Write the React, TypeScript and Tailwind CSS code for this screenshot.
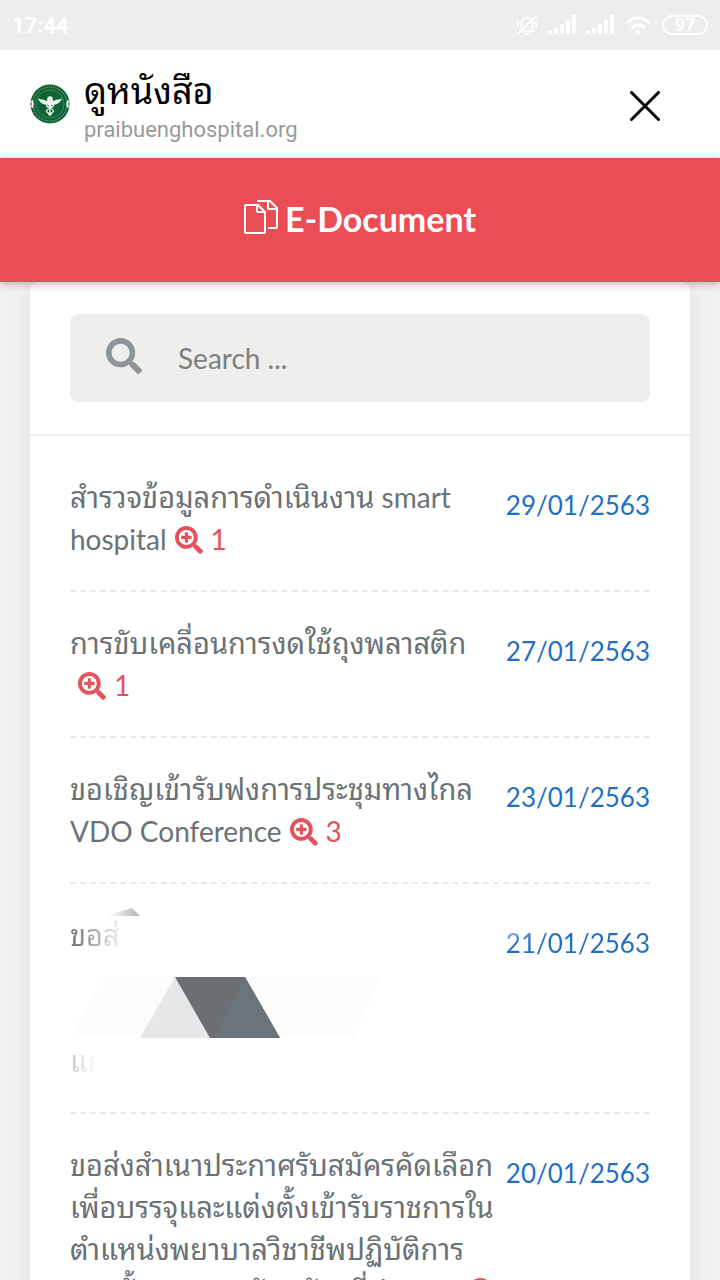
import React from "react";
import { FaSearch, FaSearchPlus } from "react-icons/fa";

type Doc = { title: string; latin?: string; date: string; views?: number; redacted?: boolean };

const docs: Doc[] = [
  { title: "สำรวจข้อมูลการดำเนินงาน", latin: "smart hospital", date: "29/01/2563", views: 1 },
  { title: "การขับเคลื่อนการงดใช้ถุงพลาสติก", date: "27/01/2563", views: 1 },
  { title: "ขอเชิญเข้ารับฟงการประชุมทางไกล", latin: "VDO Conference", date: "23/01/2563", views: 3 },
  { title: "ขอส่", date: "21/01/2563", redacted: true },
  {
    title: "ขอส่งสำเนาประกาศรับสมัครคัดเลือกเพื่อบรรจุและแต่งตั้งเข้ารับราชการในตำแหน่งพยาบาลวิชาชีพปฏิบัติการ ตามขั้นตอนการรับสมัครที่ประกาศ",
    date: "20/01/2563",
  },
];

function Signal() {
  return (
    <svg width="28" height="20" viewBox="0 0 28 20" fill="currentColor" aria-hidden="true">
      <rect x="0" y="16" width="4" height="3" />
      <rect x="6" y="13" width="4" height="6" />
      <rect x="12" y="9" width="4" height="10" />
      <rect x="18" y="5" width="4" height="14" />
      <rect x="24" y="0" width="4" height="19" />
    </svg>
  );
}

function StatusBar() {
  return (
    <div className="flex h-[50px] shrink-0 items-center justify-between bg-[#ebedee] px-3 font-[Roboto,sans-serif] text-white">
      <span className="text-[22px] font-bold">17:44</span>
      <div className="flex items-center gap-2.5">
        <svg width="22" height="22" viewBox="0 0 24 24" fill="none" stroke="currentColor" strokeWidth="2" strokeLinecap="round" strokeLinejoin="round" aria-hidden="true">
          <path d="M6 17v-7a6 6 0 0 1 12 0v7l2 2H4zM10 22h4M2 22 22 2M2 9v5M22 9v5" />
        </svg>
        <Signal />
        <Signal />
        <svg width="24" height="20" viewBox="0 0 24 20" fill="none" stroke="currentColor" strokeWidth="3" aria-hidden="true" className="mx-0.5">
          <path d="M1 8C7 1 17 1 23 8M5.500 13c4-4 9-4 13 0" />
          <circle cx="12" cy="17" r="2.200" fill="currentColor" stroke="none" />
        </svg>
        <span className="flex h-5 w-[46px] items-center justify-center rounded-full border-2 border-white text-lg leading-none font-bold">97</span>
      </div>
    </div>
  );
}

function Emblem() {
  return (
    <svg width="40" height="40" viewBox="0 0 40 40" aria-hidden="true" className="shrink-0">
      <circle cx="20" cy="20" r="19.500" fill="#0f6233" />
      <circle cx="20" cy="20" r="17" fill="none" stroke="#a9cdb6" strokeWidth="1.400" strokeDasharray="1.200 1" pathLength="107" opacity="0.5" />
      <circle cx="20" cy="20" r="14" fill="none" stroke="#4a8f65" strokeWidth="0.800" />
      <path d="M2 16.500q1.500 3.500 0 7M38 16.500q-1.500 3.500 0 7" stroke="#fff" strokeWidth="2" fill="none" />
      <path d="M18.500 21C13 21 9.500 18.500 8 14.500c3 1.500 6 .5 8.500 2.500l3.500-3 3.500 3c2.500-2 5.500-1 8.500-2.500-1.500 4-5 6.500-10.500 6.500v3h-3z" fill="#e9f3ec" />
      <circle cx="20" cy="15" r="2.800" fill="#e9f3ec" />
      <path d="M20 17v15M16.500 21c0 4 7 3 7 6s-5 2-5 4M23.500 21c0 4-7 3-7 6s5 2 5 4" stroke="#e9f3ec" strokeWidth="1.300" fill="none" />
    </svg>
  );
}

function AppHeader() {
  return (
    <header className="flex h-[108px] shrink-0 items-center bg-white pr-[60px] pl-[30px] font-[Roboto,'Noto_Sans_Thai_Looped','Noto_Sans_Thai','Noto_Sans',sans-serif]">
      <Emblem />
      <div className="ml-3.5 flex-1 pt-1">
        <h1 className="text-4xl leading-[48px] text-black">ดูหนังสือ</h1>
        <p className="text-[22px] leading-[28px] text-[#999]">praibuenghospital.org</p>
      </div>
      <button type="button" aria-label="Close" className="mt-1 text-black">
        <svg width="30" height="30" viewBox="0 0 30 30" fill="none" stroke="currentColor" strokeWidth="3" strokeLinecap="round" aria-hidden="true">
          <path d="M1.500 1.500l27 27M28.500 1.500l-27 27" />
        </svg>
      </button>
    </header>
  );
}

function CopyIcon() {
  return (
    <svg width="34" height="34" viewBox="0 0 34 34" fill="none" stroke="currentColor" strokeWidth="2" strokeLinejoin="round" aria-hidden="true" className="mb-0.5">
      <path d="M2 5h12l7 7v20q0 1-1 1H2q-1 0-1-1V6q0-1 1-1zM13 5v6q0 1 1 1h7" />
      <path d="M13 1h13l7 7v19q0 1-1 1h-8M24 1v7q0 1 1 1h8" />
    </svg>
  );
}

function SearchBox() {
  return (
    <div className="border-b-2 border-[#ececec] px-10 py-8">
      <label className="flex h-[88px] items-center rounded-lg bg-[#eeeeed] pl-9">
        <FaSearch className="mb-1 size-9 text-[#8d9599]" aria-hidden="true" />
        <input
          type="text"
          aria-label="Search"
          placeholder="Search ..."
          className="ml-9 min-w-0 flex-1 bg-transparent text-[28px] outline-none placeholder:text-[#808080]"
        />
      </label>
    </div>
  );
}

function MaskedTitle() {
  return (
    <div className="relative h-[168px]">
      <span className="bg-linear-to-r from-[#6b7276] to-white to-[56px] bg-clip-text text-[29px] leading-[36px] text-transparent">ขอส่</span>
      <svg className="absolute left-0 top-[-9px] w-[330px]" height="180" viewBox="0 0 330 180" aria-hidden="true">
        <defs>
          <linearGradient id="smudge">
            <stop offset="0" stopColor="#fff" />
            <stop offset="1" stopColor="#b4b4b4" />
          </linearGradient>
        </defs>
        <path d="M36 11 62 3 70 11z" fill="url(#smudge)" />
        <path d="M34 72h276l-26 61H0z" fill="#fcfcfa" />
        <path d="M105 72 70 133h70z" fill="#e5e7e8" />
        <path d="M105 72h70l35 61h-70z" fill="#6b6e73" />
        <path d="M175 72 210 133h-66z" fill="#68737a" />
      </svg>
      <span className="absolute left-0 top-[126px] bg-linear-to-r from-[#c4c7c9] to-white to-[26px] bg-clip-text text-[29px] text-transparent">แก</span>
    </div>
  );
}

function DocRow({ doc }: { doc: Doc }) {
  return (
    <li className="flex justify-between border-b-2 border-dashed border-[#e8e8e8] py-[30px]">
      <div className="w-[430px] shrink grow-0">
        {doc.redacted ? (
          <MaskedTitle />
        ) : (
          <a href="#document" className="text-[#6b7276]">
            <span className="text-[29px] leading-[36px]">{doc.title}</span>
            {doc.latin && <span> {doc.latin}</span>}
            <FaSearchPlus className="mb-1.5 ml-2 inline size-7 text-[#e4525b]" aria-hidden="true" />
            {doc.views && <span className="ml-2 text-[#e4525b]">{doc.views}</span>}
          </a>
        )}
      </div>
      <time
        className={
          doc.redacted
            ? "mt-2 h-[42px] bg-linear-to-br from-[#c3d8ef] to-[#1f6fc4] to-30% bg-clip-text text-[26px] text-transparent"
            : "mt-2 text-[26px] text-[#1f6fc4]"
        }
      >
        {doc.date}
      </time>
    </li>
  );
}

export default function App() {
  return (
    <div className="flex h-screen flex-col overflow-hidden bg-[#f2f2f2]">
      <StatusBar />
      <AppHeader />
      <div className="z-10 flex h-[124px] shrink-0 items-center justify-center gap-[7px] bg-[#eb4d55] pb-1 font-[Lato,sans-serif] text-white shadow-[0_2px_8px_rgba(60,90,100,0.4)]">
        <CopyIcon />
        <h2 className="text-[34px] font-bold">E-Document</h2>
      </div>
      <main className="min-h-0 flex-1 overflow-y-auto px-[30px] font-[Lato,'Noto_Sans_Thai_Looped','Noto_Sans_Thai','Noto_Sans',sans-serif] text-[28px] leading-[42px] [scrollbar-width:none]">
        <section className="rounded-t-lg bg-white shadow-[0_0_30px_rgba(0,0,0,0.08)]">
          <SearchBox />
          <ul className="px-10 pt-2.5">
            {docs.map((doc) => (
              <DocRow key={doc.date} doc={doc} />
            ))}
          </ul>
        </section>
      </main>
    </div>
  );
}
